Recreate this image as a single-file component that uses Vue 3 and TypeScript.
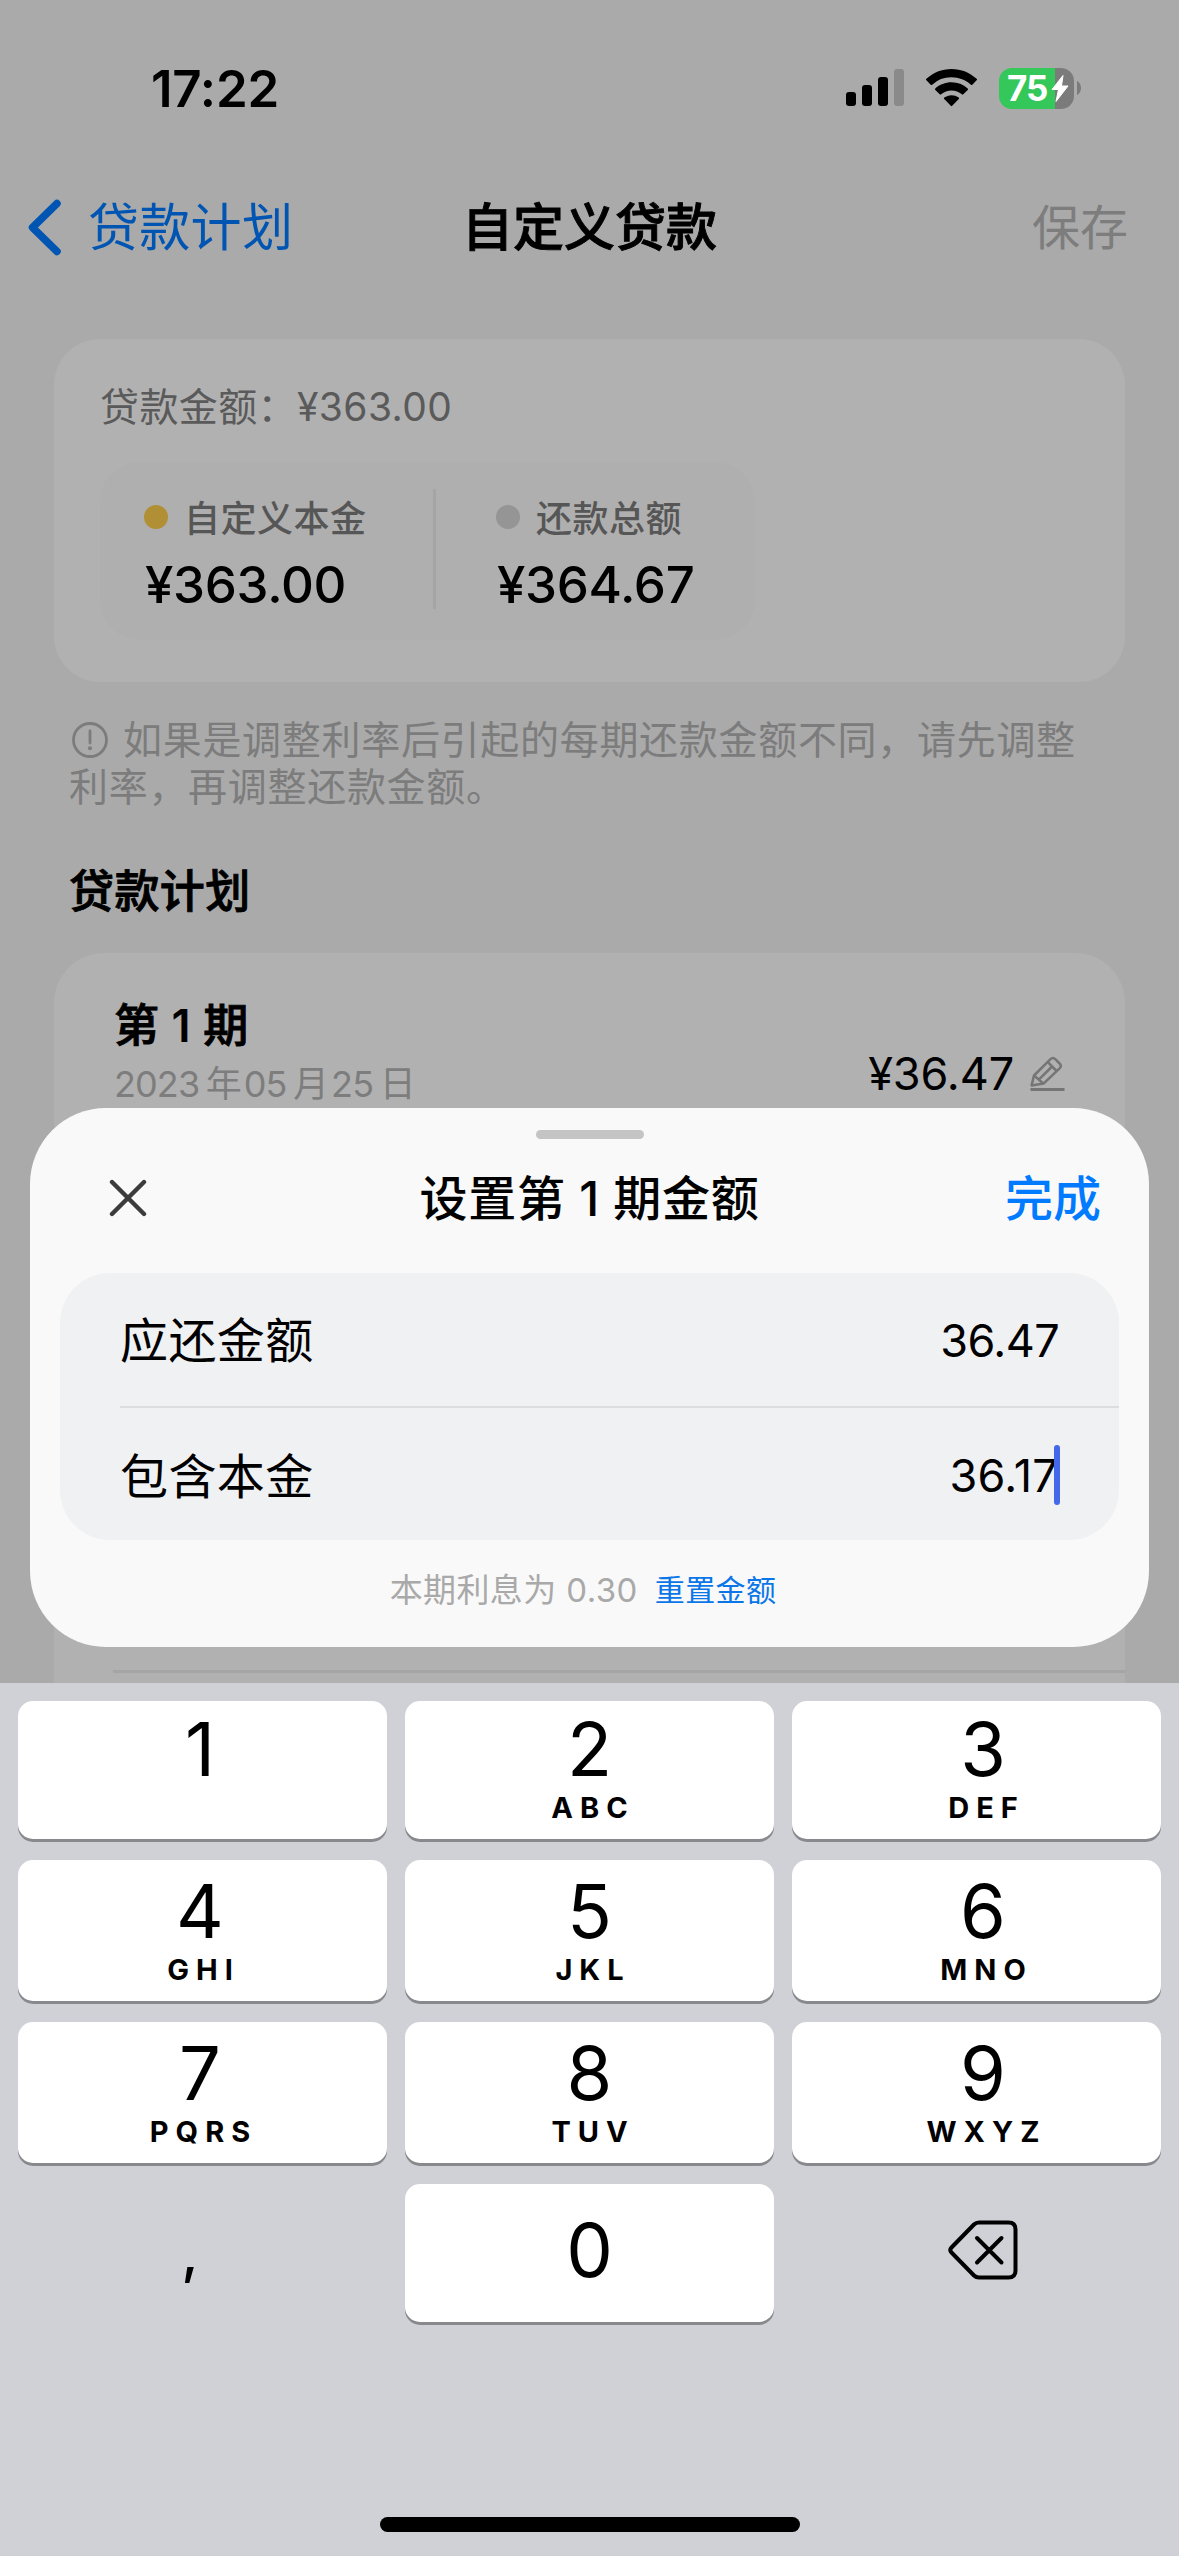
<script setup lang="ts">
interface Key {
  digit: string
  letters: string
}

interface Stat {
  label: string
  value: string
  tone: string
}

const stats: Stat[] = [
  { label: '自定义本金', value: '¥363.00', tone: 'gold' },
  { label: '还款总额', value: '¥364.67', tone: 'gray' },
]

const keyRows: Key[][] = [
  [
    { digit: '1', letters: '' },
    { digit: '2', letters: 'ABC' },
    { digit: '3', letters: 'DEF' },
  ],
  [
    { digit: '4', letters: 'GHI' },
    { digit: '5', letters: 'JKL' },
    { digit: '6', letters: 'MNO' },
  ],
  [
    { digit: '7', letters: 'PQRS' },
    { digit: '8', letters: 'TUV' },
    { digit: '9', letters: 'WXYZ' },
  ],
]
</script>

<template>
  <div class="screen">
    <div class="page">
      <header class="status">
        <span class="time">17:22</span>
        <div class="indicators">
          <svg class="signal" width="58" height="38" viewBox="0 0 58 38">
            <rect x="0" y="23" width="10" height="14" rx="3" />
            <rect x="16" y="16" width="10" height="21" rx="3" />
            <rect x="32" y="8" width="10" height="29" rx="3" />
            <rect x="48" y="0" width="10" height="37" rx="3" fill="#8a8a8a" />
          </svg>
          <svg class="wifi" width="51" height="38" viewBox="0 0 51 38">
            <path d="M25.5 0C15.8 0 7 3.700.4 9.800a1 1 0 0 0 0 1.500l4.300 4.400a1 1 0 0 0 1.400 0A28.500 28.500 0 0 1 25.500 8.300c7.500 0 14.300 2.800 19.400 7.400a1 1 0 0 0 1.400 0l4.300-4.400a1 1 0 0 0 0-1.500C44 3.700 35.200 0 25.500 0Z" />
            <path d="M25.500 13.300c-6.200 0-11.900 2.300-16.200 6.100a1 1 0 0 0 0 1.500l4.400 4.400a1 1 0 0 0 1.400 0 15.800 15.800 0 0 1 20.800 0 1 1 0 0 0 1.400 0l4.400-4.400a1 1 0 0 0 0-1.500 24.400 24.400 0 0 0-16.200-6.100Z" />
            <path d="M25.500 26.200c-2.700 0-5.200.9-7.200 2.400a1 1 0 0 0-.1 1.500l6.600 6.700a1 1 0 0 0 1.400 0l6.600-6.700a1 1 0 0 0-.1-1.500 12 12 0 0 0-7.200-2.400Z" />
          </svg>
          <div class="battery">
            <div class="battery-body">
              <span class="battery-level">75</span>
              <svg class="bolt" width="18" height="27" viewBox="0 0 18 27">
                <path d="M12 .5 1 14.500h6.500L5 26.500l12-15.500h-6.500Z" fill="#fff" stroke="#fff" stroke-linejoin="round" />
              </svg>
            </div>
            <svg width="4" height="14" viewBox="0 0 4 14"><path d="M0 0c2.500 1 4 4 4 7s-1.500 6-4 7Z" fill="#7b7b7b" /></svg>
          </div>
        </div>
      </header>

      <nav class="nav">
        <div class="back">
          <svg width="34" height="57" viewBox="0 0 34 57">
            <path d="M29 4.500 4.500 28.500l24.500 24" fill="none" stroke="#0055b3" stroke-width="7.500" stroke-linecap="round" stroke-linejoin="round" />
          </svg>
          <span class="nav-text">贷款计划</span>
        </div>
        <h1 class="nav-title nav-text">自定义贷款</h1>
        <span class="save nav-text">保存</span>
      </nav>

      <section class="card summary">
        <p class="amount">贷款金额：<span>¥363.00</span></p>
        <div class="stats">
          <div v-for="stat in stats" :key="stat.label" class="stat">
            <div class="stat-label"><i class="dot" :class="stat.tone"></i>{{ stat.label }}</div>
            <div class="stat-value">{{ stat.value }}</div>
          </div>
        </div>
      </section>

      <p class="note">
        <svg width="36" height="36" viewBox="0 0 36 36">
          <circle cx="18" cy="18" r="16.500" fill="none" stroke="#7c7c7c" stroke-width="2.800" />
          <path d="M18 9v12" stroke="#7c7c7c" stroke-width="2.800" stroke-linecap="round" />
          <circle cx="18" cy="26.200" r="2" fill="#7c7c7c" />
        </svg>如果是调整利率后引起的每期还款金额不同，请先调整<br />利率，再调整还款金额。
      </p>

      <h2 class="heading">贷款计划</h2>

      <section class="card plan">
        <div class="term">
          <div>
            <div class="term-name">第 <span class="n">1</span> 期</div>
            <div class="term-date">2023<b>年</b>05<b>月</b>25<b>日</b></div>
          </div>
          <div class="term-amount">
            <span>¥36.47</span>
            <svg width="35" height="36" viewBox="0 0 35 36">
              <g fill="none" stroke="#757575" stroke-width="2.500" stroke-linejoin="round">
                <path d="M1.600 29.400 4 19.500 20.500 3.200q2.400-2.400 4.800 0l4.300 4.300q2.400 2.400 0 4.800L13.500 27.600Z" />
                <path d="m4 19.500 9.500 8.100M17.800 6.200l8.800 8.800M8.800 23.700 22 10.500" />
              </g>
              <path d="M.5 33.500h34" stroke="#757575" stroke-width="2.800" />
            </svg>
          </div>
        </div>
        <div class="plan-line"></div>
      </section>
    </div>

    <section class="sheet">
      <div class="grabber"></div>
      <div class="sheet-head">
        <svg class="close" width="38" height="38" viewBox="0 0 38 38">
          <path d="m3 3 32 32M35 3 3 35" stroke="#3c3c3c" stroke-width="4.400" stroke-linecap="round" />
        </svg>
        <h2 class="sheet-title">设置第 1 期金额</h2>
        <span class="done">完成</span>
      </div>
      <div class="form">
        <div class="row">
          <span class="label">应还金额</span>
          <span class="num">36.47</span>
        </div>
        <div class="row">
          <span class="label">包含本金</span>
          <span class="num active">36.17<i class="caret"></i></span>
        </div>
      </div>
      <p class="hint">本期利息为 0.30<a class="reset">重置金额</a></p>
    </section>

    <section class="keyboard">
      <div v-for="(row, i) in keyRows" :key="i" class="keys">
        <div v-for="key in row" :key="key.digit" class="key">
          <span class="digit">{{ key.digit }}</span>
          <span class="letters">{{ key.letters }}</span>
        </div>
      </div>
      <div class="keys">
        <div class="plain"><span class="comma">,</span></div>
        <div class="key zero"><span class="digit">0</span></div>
        <div class="plain">
          <svg width="70" height="60" viewBox="0 0 70 60">
            <g fill="none" stroke="#000" stroke-width="4" stroke-linecap="round" stroke-linejoin="round">
              <path d="M31 2.500h29.500q7 0 7 7v41q0 7-7 7H31q-3 0-5-2L3.500 32.500q-2.400-2.500 0-5L26 4.500q2-2 5-2Z" />
              <path d="m29 18 24.500 24.500M53.500 18 29 42.500" />
            </g>
          </svg>
        </div>
      </div>
      <div class="home"></div>
    </section>
  </div>
</template>

<style>
body {
  margin: 0;
}
</style>

<style scoped>
.screen {
  position: relative;
  width: 1179px;
  height: 2556px;
  overflow: hidden;
  background: #aaaaaa;
  color: #000;
  font-family: Inter, 'Noto Sans CJK SC', sans-serif;
}
h1,
h2,
p {
  margin: 0;
}
svg {
  display: block;
  flex: none;
}
.status {
  display: flex;
  justify-content: space-between;
  align-items: center;
  height: 176px;
  padding: 0 98px 0 151px;
}
.time {
  font-size: 51px;
  font-weight: 600;
  letter-spacing: -0.200px;
}
.indicators {
  display: flex;
  align-items: center;
}
.wifi {
  margin: 0 22px;
}
.battery {
  display: flex;
  align-items: center;
  gap: 3px;
}
.battery-body {
  display: flex;
  align-items: center;
  box-sizing: border-box;
  width: 75px;
  height: 41px;
  padding-left: 8px;
  border-radius: 13px;
  background: linear-gradient(to right, #34c759 56px, #7b7b7b 56px);
}
.battery-level {
  width: 44px;
  color: #fff;
  font-size: 35px;
  font-weight: 700;
  letter-spacing: -1px;
}
.nav {
  display: grid;
  grid-template-columns: 1fr auto 1fr;
  align-items: center;
  height: 102px;
  padding: 0 28px;
  line-height: 60px;
}
.nav-text {
  padding-top: 2px;
}
.back {
  display: flex;
  align-items: center;
  gap: 26px;
  color: #0055b3;
  font-size: 51px;
  letter-spacing: 0.3px;
}
.nav-title,
.heading,
.term-name {
  font-weight: 500;
  -webkit-text-stroke: 0.900px #000;
}
.nav-title {
  font-size: 51px;
}
.save {
  justify-self: end;
  margin-right: 23px;
  color: #7d7d7d;
  font-size: 48px;
}
.card {
  box-sizing: border-box;
  margin: 0 54px;
  background: #b1b1b1;
}
.summary {
  height: 343px;
  margin-top: 61px;
  padding: 44px 46px 0;
  border-radius: 46px;
}
.amount {
  color: #5a5a5a;
  font-size: 39px;
  line-height: 48px;
  letter-spacing: 0.4px;
}
.stats {
  display: flex;
  box-sizing: border-box;
  width: 655px;
  height: 178px;
  margin-top: 31px;
  border-radius: 40px;
  background: #afafaf;
}
.stat {
  box-sizing: border-box;
  height: 120px;
  margin-top: 27px;
  padding-left: 44px;
}
.stat:first-child {
  width: 336px;
  border-right: 3px solid #a5a5a5;
}
.stat + .stat {
  padding-left: 60px;
}
.stat-label {
  display: flex;
  align-items: center;
  height: 54px;
  padding-bottom: 2px;
  color: #565656;
  font-size: 36px;
  font-weight: 500;
  letter-spacing: 0.5px;
}
.dot {
  position: relative;
  top: 1px;
  width: 24px;
  height: 24px;
  margin-right: 16px;
  border-radius: 50%;
}
.gold {
  background: #b08f35;
}
.gray {
  background: #959595;
}
.stat-value {
  margin-left: 1px;
  font-size: 51px;
  font-weight: 500;
  line-height: 80px;
  letter-spacing: -0.300px;
}
.note {
  margin: 35px 60px 0 69px;
  color: #7c7c7c;
  font-size: 39px;
  line-height: 46.500px;
  letter-spacing: 0.700px;
  white-space: nowrap;
}
.note svg {
  display: inline-block;
  margin: 0 15px 0 3px;
  vertical-align: -4px;
}
.heading {
  margin: 52px 0 0 69px;
  font-size: 45px;
  line-height: 60px;
  letter-spacing: 0.400px;
}
.plan {
  height: 760px;
  margin-top: 31px;
  border-radius: 50px 50px 0 0;
}
.term {
  display: flex;
  justify-content: space-between;
  height: 717px;
  padding: 43px 60px 0 60px;
  box-sizing: border-box;
}
.term-name {
  font-size: 45px;
  line-height: 60px;
  letter-spacing: 0.300px;
}
.n {
  font-weight: 600;
  -webkit-text-stroke: 0;
}
.term-date {
  color: #7d7d7d;
  font-size: 36px;
  line-height: 56px;
  letter-spacing: -0.900px;
}
.term-date b {
  margin: 0 2px 0 6.500px;
  font-weight: 400;
  letter-spacing: 0;
}
.term-amount {
  display: flex;
  align-items: center;
  gap: 16px;
  height: 60px;
  margin-top: 48px;
  font-size: 45px;
  letter-spacing: -0.100px;
}
.term-amount span {
  padding-bottom: 2px;
}
.plan-line {
  height: 3px;
  margin-left: 59px;
  background: #a5a5a5;
}
.sheet {
  position: absolute;
  left: 30px;
  top: 1108px;
  box-sizing: border-box;
  width: 1119px;
  height: 539px;
  padding-top: 22px;
  border-radius: 76px;
  background: #f9f9f9;
}
.grabber {
  width: 108px;
  height: 9px;
  margin: 0 auto;
  border-radius: 5px;
  background: #c4c4c4;
}
.sheet-head {
  display: grid;
  grid-template-columns: 1fr auto 1fr;
  align-items: center;
  height: 118px;
  padding: 0 48px;
  font-size: 48px;
  font-weight: 500;
}
.close {
  margin-left: 31px;
}
.sheet-title {
  padding-bottom: 7px;
  font-size: 48px;
  font-weight: 500;
  letter-spacing: 0.700px;
}
.done {
  justify-self: end;
  padding-bottom: 7px;
  color: #007aff;
}
.form {
  width: 1059px;
  height: 267px;
  margin: 16px 0 0 30px;
  border-radius: 50px;
  background: #f0f1f3;
}
.row {
  display: flex;
  justify-content: space-between;
  align-items: center;
  box-sizing: border-box;
  height: 135px;
  margin-left: 60px;
  padding-right: 60px;
  border-bottom: 2px solid #dcdddf;
  font-size: 48px;
}
.row:last-child {
  height: 134px;
  border-bottom: 0;
}
.label {
  padding-bottom: 5px;
  letter-spacing: 0.400px;
}
.num {
  position: relative;
  padding-top: 2px;
  font-size: 45px;
  letter-spacing: -0.600px;
}
.active {
  right: 1px;
  padding-top: 0;
  letter-spacing: 0.300px;
}
.caret {
  position: absolute;
  right: -2px;
  top: 50%;
  width: 6px;
  height: 60px;
  margin-top: -30px;
  border-radius: 3px;
  background: #4368e9;
}
.hint {
  display: flex;
  justify-content: center;
  align-items: center;
  height: 60px;
  margin: 18px 13px 0 0;
  color: #a9a9a9;
  font-size: 33px;
  letter-spacing: 0.400px;
}
.reset {
  margin-left: 17px;
  color: #0b76e8;
  font-size: 30px;
  letter-spacing: 0.400px;
}
.keyboard {
  position: absolute;
  left: 0;
  bottom: 0;
  display: flex;
  flex-direction: column;
  gap: 21px;
  box-sizing: border-box;
  width: 1179px;
  height: 873px;
  padding: 18px 18px 0;
  background: #d0d1d7;
}
.keys {
  display: grid;
  grid-template-columns: repeat(3, 369px);
  gap: 18px;
  height: 141px;
}
.keys:first-child,
.keys:nth-child(4) {
  height: 138px;
}
.key {
  display: flex;
  flex-direction: column;
  align-items: center;
  box-sizing: border-box;
  padding-top: 12px;
  border-radius: 15px;
  background: #fff;
  box-shadow: 0 3px 0 #88898d;
}
.keys:first-child .key {
  padding-top: 9px;
}
.key:first-child {
  padding-right: 5px;
}
.key:last-child {
  padding-left: 13px;
}
.digit {
  font-size: 74px;
  line-height: 78px;
}
.letters {
  margin-left: 7px;
  font-size: 29px;
  font-weight: 700;
  line-height: 40px;
  letter-spacing: 7px;
}
.zero {
  justify-content: center;
  padding: 0 0 6px;
}
.plain {
  display: flex;
  justify-content: center;
  align-items: center;
}
.comma {
  margin: 0 25px 0 0;
  font-size: 56px;
  font-weight: 500;
  line-height: 80px;
}
.plain svg {
  margin: 0 0 6px 13px;
}
.home {
  position: absolute;
  left: 380px;
  bottom: 24px;
  width: 420px;
  height: 15px;
  border-radius: 8px;
  background: #000;
}
</style>
